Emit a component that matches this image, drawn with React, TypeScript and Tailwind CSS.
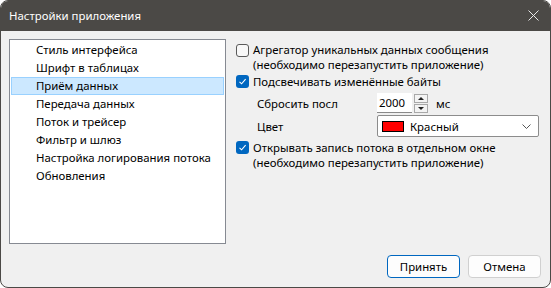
import React from "react";

const items = [
  "Стиль интерфейса",
  "Шрифт в таблицах",
  "Приём данных",
  "Передача данных",
  "Поток и трейсер",
  "Фильтр и шлюз",
  "Настройка логирования потока",
  "Обновления",
];

function Check({ on, className = "" }: { on?: boolean; className?: string }) {
  if (on) {
    return (
      <span className={`w-[13px] h-[13px] shrink-0 rounded-[3px] bg-[#0067c0] flex items-center justify-center ${className}`}>
        <svg width="9" height="9" viewBox="0 0 9 9">
          <path d="M1.5 4.8 L3.6 6.8 L7.6 2.2" fill="none" stroke="white" strokeWidth="1.1" />
        </svg>
      </span>
    );
  }
  return <span className={`w-[13px] h-[13px] shrink-0 rounded-[3px] border border-[#5a5a5a] bg-[#f8f8f8] ${className}`} />;
}

export default function App() {
  return (
    <div className="w-[551px] h-[288px] bg-white" style={{ fontFamily: '"Noto Sans", "Open Sans", sans-serif' }}>
      <div className="w-full h-full flex flex-col rounded-[8px] border border-[#4b4946] overflow-hidden bg-[#f0f0f0] text-[11.4px] text-black">
        {/* title bar */}
        <div className="h-[30px] shrink-0 bg-[#4b4946] flex items-center justify-between pl-[8px] pr-[10px] text-white">
          <span className="leading-none -mt-[1px]">Настройки приложения</span>
          <svg width="11" height="11" viewBox="0 0 11 11" className="mr-[1px] -mt-[1px]">
            <path d="M0.5 0.5 L10.5 10.5 M10.5 0.5 L0.5 10.5" stroke="#e8e8e8" strokeWidth="1" />
          </svg>
        </div>

        <div className="flex flex-1 pt-[8px] pl-[8px]">
          {/* list */}
          <div className="w-[217px] h-[205px] shrink-0 bg-white border border-[#868a92] pt-[1px] px-[1px]">
            {items.map((t, i) => (
              <div
                key={t}
                className={`h-[18px] leading-[16px] pl-[24px] border ${
                  i === 2 ? "bg-[#cce8ff] border-[#99d1ff]" : "border-transparent"
                }`}
              >
                {t}
              </div>
            ))}
          </div>

          {/* settings */}
          <div className="ml-[10px] pt-[3px] flex flex-col leading-[15px]">
            <div className="flex items-start gap-[4px]">
              <Check className="mt-[2px]" />
              <div>
                <div>Агрегатор уникальных данных сообщения</div>
                <div>(необходимо перезапустить приложение)</div>
              </div>
            </div>

            <div className="flex items-start gap-[4px] mt-[2px]">
              <Check on className="mt-[1px]" />
              <div>Подсвечивать изменённые байты</div>
            </div>

            <div className="flex items-center mt-[4px] h-[20px]">
              <div className="w-[141px] pl-[21px]">Сбросить посл</div>
              <div className="w-[35px] h-[20px] bg-white border-b border-[#8a8a8a] pl-[2px] flex items-center">2000</div>
              <div className="ml-[2px] flex flex-col gap-[1px]">
                <div className="w-[14px] h-[9px] border border-[#a8a8a8] bg-[#f3f3f3] flex items-center justify-center">
                  <svg width="6" height="3" viewBox="0 0 6 3"><path d="M0 3 L3 0 L6 3 Z" fill="#222" /></svg>
                </div>
                <div className="w-[14px] h-[9px] border border-[#a8a8a8] bg-[#f3f3f3] flex items-center justify-center">
                  <svg width="6" height="3" viewBox="0 0 6 3"><path d="M0 0 L3 3 L6 0 Z" fill="#222" /></svg>
                </div>
              </div>
              <div className="ml-[8px]">мс</div>
            </div>

            <div className="flex items-center mt-[2px] h-[22px]">
              <div className="w-[141px] pl-[21px]">Цвет</div>
              <div className="w-[162px] h-[22px] bg-white border border-[#8c8c8c] rounded-[2px] flex items-center pl-[4px] pr-[7px]">
                <span className="w-[22px] h-[11px] bg-[#ff0000] border border-black shrink-0" />
                <span className="ml-[6px] flex-1">Красный</span>
                <svg width="9" height="5" viewBox="0 0 9 5">
                  <path d="M0.5 0.5 L4.5 4.5 L8.5 0.5" fill="none" stroke="#555" strokeWidth="1" />
                </svg>
              </div>
            </div>

            <div className="flex items-start gap-[4px] mt-[3px]">
              <Check on className="mt-[1px]" />
              <div>
                <div>Открывать запись потока в отдельном окне</div>
                <div>(необходимо перезапустить приложение)</div>
              </div>
            </div>
          </div>
        </div>

        {/* footer */}
        <div className="flex justify-end gap-[8px] pr-[9px] pb-[9px]">
          <button className="w-[73px] h-[23px] rounded-[4px] bg-[#fdfdfd] border border-[#0067c0] text-[11.4px]">Принять</button>
          <button className="w-[73px] h-[23px] rounded-[4px] bg-[#fdfdfd] border border-[#d0d0d0] text-[11.4px]">Отмена</button>
        </div>
      </div>
    </div>
  );
}
